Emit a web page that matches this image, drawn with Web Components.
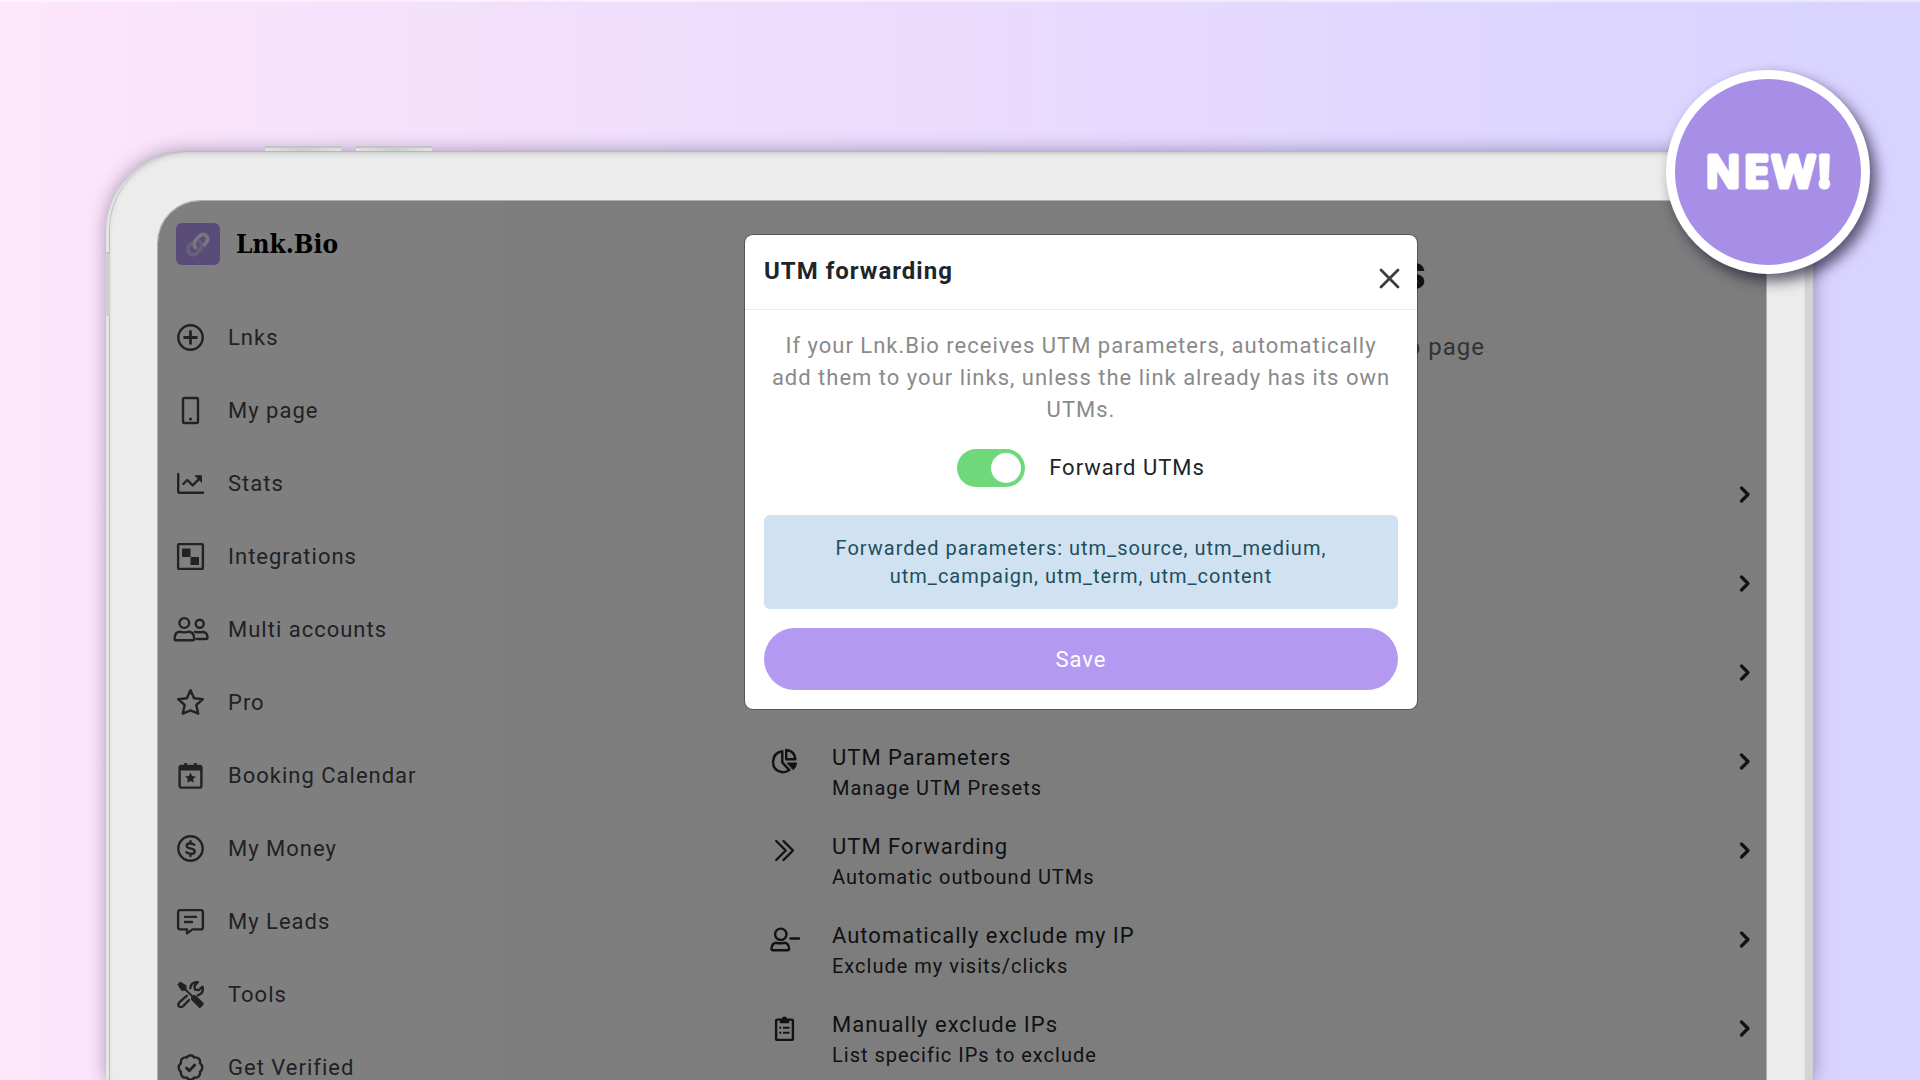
<!DOCTYPE html>
<html lang="en">
<head>
<meta charset="utf-8">
<title>Lnk.Bio - UTM forwarding</title>
<style>
  body {
    margin: 0;
    height: 100vh;
    overflow: hidden;
    font-family: Roboto, "Liberation Sans", sans-serif;
    letter-spacing: 1px;
    color: #212529;
    background: linear-gradient(90deg, #fee6fa 0%, #f6e2fb 15%, #ecdcfd 45%, #e8dafe 57%, #ddd6ff 80%, #d8d3ff 100%);
    box-shadow: inset 0 2px 1px rgba(255, 255, 255, .5);
  }
</style>
</head>
<body>
<promo-page>
  <tablet-frame>
    <side-nav>
      <nav-item icon="plus">Lnks</nav-item>
      <nav-item icon="phone">My page</nav-item>
      <nav-item icon="stats">Stats</nav-item>
      <nav-item icon="blocks">Integrations</nav-item>
      <nav-item icon="users">Multi accounts</nav-item>
      <nav-item icon="star">Pro</nav-item>
      <nav-item icon="calendar">Booking Calendar</nav-item>
      <nav-item icon="dollar">My Money</nav-item>
      <nav-item icon="message">My Leads</nav-item>
      <nav-item icon="tools">Tools</nav-item>
      <nav-item icon="verified">Get Verified</nav-item>
    </side-nav>
    <settings-page>
      <span slot="title">Stats</span>
      <span slot="subtitle">Bio page</span>
      <setting-row></setting-row>
      <setting-row></setting-row>
      <setting-row></setting-row>
      <setting-row icon="pie">UTM Parameters<span slot="note">Manage UTM Presets</span></setting-row>
      <setting-row icon="forward">UTM Forwarding<span slot="note">Automatic outbound UTMs</span></setting-row>
      <setting-row icon="userMinus">Automatically exclude my IP<span slot="note">Exclude my visits/clicks</span></setting-row>
      <setting-row icon="clipboard">Manually exclude IPs<span slot="note">List specific IPs to exclude</span></setting-row>
    </settings-page>
    <modal-dialog slot="overlay">
      <span slot="title">UTM forwarding</span>
      <p>If your Lnk.Bio receives UTM parameters, automatically add them to your links, unless the link already has its own UTMs.</p>
      <toggle-switch checked>Forward UTMs</toggle-switch>
      <info-box>Forwarded parameters: utm_source, utm_medium, utm_campaign, utm_term, utm_content</info-box>
      <save-button>Save</save-button>
    </modal-dialog>
  </tablet-frame>
  <new-badge slot="badge" text="NEW!"></new-badge>
</promo-page>

<script>
// every icon is drawn in a 27 x 27 box
const ICONS = {
    plus: `<circle cx="13.5" cy="13.5" r="12.2"/><path stroke-width="2.8" d="M13.5 7.500v12M7.500 13.5h12"/>`,
    phone: `<rect x="6" y="1" width="15" height="25" rx="1.5"/><circle cx="13.5" cy="22" r="1.6" fill="currentColor" stroke="none"/>`,
    stats: `<path d="M1.2 4v17.300q0 1.500 1.500 1.500H26M6.300 14l4-4 5.400 5.400 6.500-6.500"/><path fill="currentColor" stroke-width="1" d="M18.500 5.800h6v6z"/>`,
    blocks: `<rect x="1.100" y="1.100" width="24.800" height="24.800" rx="1"/><path fill="currentColor" stroke="none" d="M5 5.500h8.500V14H5zM13.500 14H22v8h-8.500z"/>`,
    users: `<circle cx="7.300" cy="7" r="4.900"/><path d="M-1 24.200q-1.400 0-1.400-1.500 0-6.500 5-7 4.800 1.300 9.600 0 5 .5 5 7 0 1.500-1.400 1.500z"/><circle cx="22.700" cy="7.800" r="4"/><path d="M18 15.800q4.500 1 8 0 4 .5 4.500 5.700 0 1.500-1.500 1.500h-9.500"/>`,
    star: `<path d="M13.500 1.200l3.600 8 8.700.9-6.500 5.900 1.900 8.700-7.700-3.300-7.700 3.300 1.900-8.700L1.200 10.100l8.700-.9z"/>`,
    calendar: `<rect x="2.600" y="4" width="21.800" height="21.600" rx="1.500"/><path d="M8.700 1v4M18.300 1v4" stroke-width="2.800" stroke-linecap="butt"/><path fill="currentColor" stroke="none" d="M3 4h21v4.600H3zM13.500 10.500l1.600 3.400 3.800.5-2.800 2.600.7 3.700-3.300-1.800-3.300 1.800.7-3.700-2.800-2.600 3.800-.5z"/>`,
    dollar: `<circle cx="13.500" cy="13.500" r="12.200"/><path d="M17.300 9.800q-1.700-1.500-4-1.500-3.600 0-3.600 2.400 0 2 3.800 2.700 4.200.8 4.200 3 0 2.500-3.900 2.500-2.700 0-4.500-1.700M13.500 6.200v2.500M13.500 18.500v2.500"/>`,
    message: `<path d="M3 2.100h21q1.900 0 1.900 1.900v15.500q0 1.900-1.900 1.900h-8.500l-5.500 4v-4H3q-1.900 0-1.900-1.900V4q0-1.900 1.900-1.900z"/><path d="M8 8.900h11M8 14h7"/>`,
    tools: `<path fill="currentColor" stroke="none" d="M.3 3.400L3.300.4l6.200 4v3.900l6 5.900q2.200-.8 3.900.9l7 6.700q1 1-.1 2.100l-2.500 2.500q-1 1-2 0l-7-7q-1.500-1.700-.6-3.900L8.200 9.700H4.400z"/><path d="M13.300 7.300q.2-5.500 6-6.200l1.500.1-3.300 3.600.5 3.800 3.800.5 3.800-3.400q1.500 5.500-3.300 8l-1.500.6M9.800 14.800l-7.300 6.400q-2.500 3 0 4.600 2.200 1.100 4.300-1.300l5.200-5.500"/>`,
    verified: `<path d="M13.500 1.200q2.300 0 3.800 2.300 2.700-.6 4.500 1.200t1.200 4.500q2.300 1.500 2.300 4.300t-2.300 4.300q.6 2.700-1.200 4.500t-4.500 1.200q-1.500 2.300-3.800 2.300t-3.800-2.300q-2.700.6-4.500-1.200T4 17.800q-2.300-1.500-2.300-4.300T4 9.200q-.6-2.700 1.200-4.500t4.500-1.200q1.500-2.300 3.800-2.300z"/><path d="M9.500 14l2.800 2.800 5.400-5.800" stroke-width="2.800"/>`,
    pie: `<path d="M11.300 3.200v11.200l7 7.700q-3 2.200-7 2.100Q2.300 23.200 2 14 2.600 4.300 11.300 3.200zM15.200 2v9.300h9.200Q23.800 3 15.200 2z"/><path fill="currentColor" stroke-width="1" d="M16.500 15h9.200q-.5 4-3.300 6.600z"/>`,
    forward: `<path d="M5.200 4l9.500 9.500L5.200 23M12.500 4l9.500 9.500-9.500 9.500"/>`,
    userMinus: `<circle cx="9.800" cy="8.300" r="5.700"/><path d="M2 24.300q-1.800 0-1.500-1.800.5-5.500 5-5.700 3.800 1 7.600 0 4.500.2 5 5.700.3 1.800-1.500 1.800zM19.500 12.500H28"/>`,
    clipboard: `<rect x="5.100" y="4.600" width="16.800" height="20.300" rx="1"/><path fill="currentColor" stroke="none" d="M8.800 4.200h2q.2-2.700 2.700-2.700t2.700 2.700h2v4H8.800z"/><path stroke-width="2" stroke-linecap="butt" d="M8.300 12.700h2M12 12.700h6.500M8.300 17.700h2M12 17.700h6.500"/>`,
    chevron: `<path stroke-width="3.200" d="M18.500 7l6.500 6.500-6.500 6.500"/>`,
    close: `<path stroke-width="2.800" d="M5 5l17 17M22 5l-17 17"/>`
};

class BaseElement extends HTMLElement {
    constructor() {
        super();
        this.attachShadow({ mode: "open" });
    }
    connectedCallback() {
        this.shadowRoot.innerHTML = this.render();
    }
}

class AppIcon extends BaseElement {
    render() {
        return /*html*/`
<style>
  :host { display: inline-flex; width: 27px; height: 27px; flex: none; }
  svg { width: 100%; height: 100%; overflow: visible; }
</style>
<svg viewBox="0 0 27 27" fill="none" stroke="currentColor" stroke-width="2.400" stroke-linecap="round" stroke-linejoin="round" aria-hidden="true">${ICONS[this.getAttribute("name")] || ""}</svg>`;
    }
}

class PromoPage extends BaseElement {
    render() {
        return /*html*/`
<style>
  :host { display: flex; flex-direction: column; position: relative; height: 100%; box-sizing: border-box; padding: 151px 106px 0; }
  ::slotted(tablet-frame) { flex: 1; min-height: 0; }
  ::slotted(new-badge) { position: absolute; top: 70px; right: 50px; z-index: 5; }
</style>
<slot></slot>
<slot name="badge"></slot>`;
    }
}

class TabletFrame extends BaseElement {
    render() {
        return /*html*/`
<style>
  :host {
    display: flex;
    position: relative;
    box-sizing: border-box;
    padding: 3px 9px 0 4px;
    border-radius: 80px 80px 0 0;
    background: linear-gradient(90deg, #e9e9e9 0, #d4d7d5 60px, #d2d5d3 100%);
    box-shadow: 0 0 18px rgba(40, 30, 70, .4), inset 0 1px 1px #b4b6b5, inset -1px 0 1px #b4b6b5;
  }
  .key { position: absolute; box-sizing: border-box; border-top: 2px solid #c4c4c4; background: linear-gradient(90deg, #e2e2e2, #cdcdcd 50%, #e2e2e2); }
  .up { left: 159px; top: -5px; width: 76px; height: 5px; }
  .down { left: 250px; top: -5px; width: 76px; height: 5px; }
  .power { left: -1px; top: 101px; width: 5px; height: 64px; background: #cfcfcf; }
  .face {
    flex: 1;
    display: flex;
    min-width: 0;
    padding: 47px 39px 0 48px;
    border-radius: 76px 71px 0 0;
    background: #ececec;
    box-shadow: -1px 0 1px #b9bdbb, inset 0 2px 4px #dcdcdc;
  }
  .screen {
    position: relative;
    flex: 1;
    display: grid;
    grid-template-columns: 348px minmax(0, 1fr);
    overflow: hidden;
    border-radius: 42px 0 0 0;
    background: #fbfbfb;
    box-shadow: 0 0 0 1px #b0b0b0;
  }
</style>
<div class="key up"></div>
<div class="key down"></div>
<div class="key power"></div>
<div class="face">
  <div class="screen"><slot></slot><slot name="overlay"></slot></div>
</div>`;
    }
}

class SideNav extends BaseElement {
    render() {
        return /*html*/`
<style>
  :host { display: block; background: #fff; border-right: 1px solid #f0f0f0; }
  a { display: flex; align-items: center; gap: 16px; padding: 22px 18px 36px; color: #000; text-decoration: none; }
  svg { width: 44px; height: 42px; }
  b { font: bold 26px/42px "DejaVu Serif Condensed", "DejaVu Serif", serif; letter-spacing: 0; }
</style>
<a href="#home">
  <svg viewBox="0 0 44 42" fill="none" stroke-width="3.800" stroke-linecap="round" stroke-linejoin="round" aria-hidden="true">
    <rect width="44" height="42" rx="6" fill="#b399f2"/>
    <path stroke="#d0c1f4" d="M17.500 19.500q-3 1-5 4.500-1.500 4.500 2 7 3.500 2 7-1.500l3-3.500q2.500-4-.5-7"/>
    <path stroke="#f2eefa" d="M19.500 24.500q-2.500-3 0-7l4-4.500q3.500-3 6.500-.5 3 3 .5 6.500l-2 2.800"/>
  </svg>
  <b>Lnk.Bio</b>
</a>
<nav><slot></slot></nav>`;
    }
}

class NavItem extends BaseElement {
    render() {
        return /*html*/`
<style>
  :host { display: block; }
  a { display: flex; align-items: center; gap: 21px; height: 73px; padding: 0 15px; font-size: 22px; line-height: 30px; color: #424447; text-decoration: none; }
  .icon { width: 34px; display: flex; justify-content: center; }
</style>
<a href="#"><span class="icon"><app-icon name="${this.getAttribute("icon")}"></app-icon></span><span><slot></slot></span></a>`;
    }
}

class SettingsPage extends BaseElement {
    render() {
        return /*html*/`
<style>
  :host { display: block; padding: 40px 16px 0 254px; }
  header { height: 222px; padding-right: 265px; text-align: right; }
  h1 { margin: 0 58px 24px 0; font-size: 48px; line-height: 64px; }
  p { margin: 0; font-size: 24px; line-height: 36px; color: #666; }
</style>
<header>
  <h1><slot name="title"></slot></h1>
  <p><slot name="subtitle"></slot></p>
</header>
<slot></slot>`;
    }
}

class SettingRow extends BaseElement {
    render() {
        return /*html*/`
<style>
  :host { display: block; }
  a { display: grid; grid-template-columns: 48px minmax(0, 1fr) 27px; column-gap: 24px; box-sizing: border-box; height: 89px; padding-top: 13px; color: #212529; text-decoration: none; }
  .icon { height: 36px; display: flex; align-items: center; justify-content: center; }
  .title { font-size: 22px; line-height: 30px; }
  .note { font-size: 20px; line-height: 30px; }
</style>
<a href="#">
  <span class="icon"><app-icon name="${this.getAttribute("icon")}"></app-icon></span>
  <span><div class="title"><slot></slot></div><div class="note"><slot name="note"></slot></div></span>
  <span class="icon"><app-icon name="chevron"></app-icon></span>
</a>`;
    }
}

class ModalDialog extends BaseElement {
    render() {
        return /*html*/`
<style>
  :host { position: absolute; inset: 0; background: rgba(0, 0, 0, .5); }
  .lane { display: flex; justify-content: center; padding: 34px 0 0 238px; }
  section { width: 672px; border-radius: 8px; background: #fff; box-shadow: 0 0 0 1px rgba(0, 0, 0, .3); }
  header { display: flex; justify-content: space-between; align-items: flex-start; box-sizing: border-box; height: 75px; padding: 20px 14px 0 19px; border-bottom: 1px solid #e9ecef; }
  h2 { margin: 0; font-size: 24px; line-height: 32px; }
  button { display: flex; padding: 10px 0 0; border: 0; background: none; color: #3c3c3c; cursor: pointer; }
  .body { padding: 20px 19px 19px; text-align: center; }
  ::slotted(p) { margin: 0 0 23px; font-size: 22px; line-height: 32px; color: #8a8a8a; }
</style>
<div class="lane">
  <section role="dialog" aria-labelledby="title">
    <header>
      <h2 id="title"><slot name="title"></slot></h2>
      <button type="button" aria-label="Close"><app-icon name="close"></app-icon></button>
    </header>
    <div class="body"><slot></slot></div>
  </section>
</div>`;
    }
    connectedCallback() {
        super.connectedCallback();
        this.shadowRoot.querySelector("button").addEventListener("click", () => this.remove());
    }
}

class ToggleSwitch extends BaseElement {
    render() {
        return /*html*/`
<style>
  :host { display: flex; align-items: center; justify-content: center; gap: 24px; margin-bottom: 28px; }
  input { appearance: none; position: relative; flex: none; width: 68px; height: 38px; margin: 0; border-radius: 19px; background: #ccc; cursor: pointer; }
  input::before { content: ""; position: absolute; left: 4px; top: 4px; width: 30px; height: 30px; border-radius: 50%; background: #fff; }
  input:checked { background: #6fd87a; }
  input:checked::before { left: 34px; }
  label { font-size: 22px; line-height: 32px; }
</style>
<input type="checkbox" role="switch" id="switch" ${this.hasAttribute("checked") ? "checked" : ""}>
<label for="switch"><slot></slot></label>`;
    }
}

class InfoBox extends BaseElement {
    render() {
        return /*html*/`
<style>
  :host { display: block; margin-bottom: 19px; padding: 19px 60px; border-radius: 6px; background: #d0e1f1; color: #1d4f5c; font-size: 20px; line-height: 28px; }
</style>
<slot></slot>`;
    }
}

class SaveButton extends BaseElement {
    render() {
        return /*html*/`
<style>
  :host { display: block; }
  button { width: 100%; height: 62px; border: 0; border-radius: 31px; background: #b399f2; color: #fff; font: inherit; font-size: 22px; letter-spacing: inherit; cursor: pointer; }
</style>
<button type="button"><slot></slot></button>`;
    }
}

class NewBadge extends BaseElement {
    render() {
        return /*html*/`
<style>
  :host { display: block; box-sizing: border-box; width: 204px; height: 204px; border: 9px solid #fff; border-radius: 50%; background: #a78ee6; box-shadow: 6px 7px 14px rgba(20, 10, 40, .65); }
  svg { width: 100%; height: 100%; }
  text { font: 600 44px "Open Sans", sans-serif; letter-spacing: 4px; }
</style>
<svg viewBox="0 0 186 186">
  <text x="95" y="108" text-anchor="middle" fill="#fff" stroke="#fff" stroke-width="5" stroke-linejoin="round">${this.getAttribute("text")}</text>
</svg>`;
    }
}

customElements.define("app-icon", AppIcon);
customElements.define("promo-page", PromoPage);
customElements.define("tablet-frame", TabletFrame);
customElements.define("side-nav", SideNav);
customElements.define("nav-item", NavItem);
customElements.define("settings-page", SettingsPage);
customElements.define("setting-row", SettingRow);
customElements.define("modal-dialog", ModalDialog);
customElements.define("toggle-switch", ToggleSwitch);
customElements.define("info-box", InfoBox);
customElements.define("save-button", SaveButton);
customElements.define("new-badge", NewBadge);
</script>
</body>
</html>
